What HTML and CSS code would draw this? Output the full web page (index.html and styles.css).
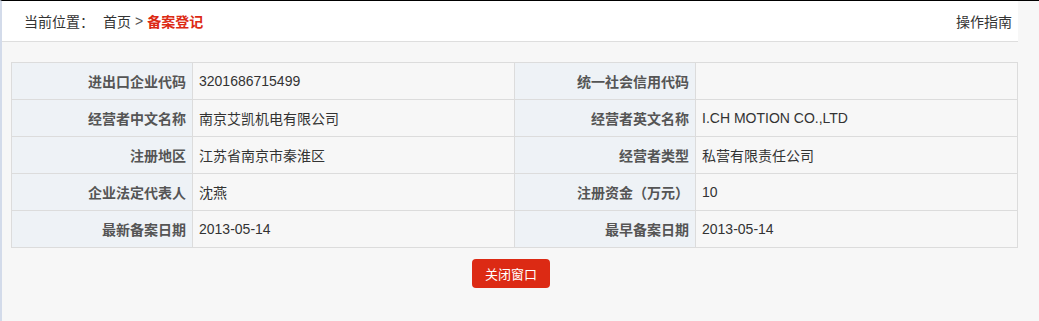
FILE: index.html
```html
<!DOCTYPE html>
<html lang="zh-CN">
<head>
    <meta charset="UTF-8">
    <title>备案登记</title>
    <link rel="stylesheet" href="styles.css">
</head>
<body>
    <div class="page">
        <header class="topbar">
            <div class="crumbs">
                <span class="crumbs-label">当前位置：</span>
                <a href="#" class="crumbs-link">首页</a>
                <span class="crumbs-sep">&gt;</span>
                <span class="crumbs-current">备案登记</span>
            </div>
            <a href="#" class="guide-link">操作指南</a>
        </header>

        <div class="content">
            <table class="info-table">
                <colgroup>
                    <col class="col-label">
                    <col class="col-value">
                    <col class="col-label">
                    <col class="col-value">
                </colgroup>
                <tbody>
                    <tr>
                        <th>进出口企业代码</th>
                        <td>3201686715499</td>
                        <th>统一社会信用代码</th>
                        <td></td>
                    </tr>
                    <tr>
                        <th>经营者中文名称</th>
                        <td>南京艾凯机电有限公司</td>
                        <th>经营者英文名称</th>
                        <td>I.CH MOTION CO.,LTD</td>
                    </tr>
                    <tr>
                        <th>注册地区</th>
                        <td>江苏省南京市秦淮区</td>
                        <th>经营者类型</th>
                        <td>私营有限责任公司</td>
                    </tr>
                    <tr>
                        <th>企业法定代表人</th>
                        <td>沈燕</td>
                        <th>注册资金（万元）</th>
                        <td>10</td>
                    </tr>
                    <tr>
                        <th>最新备案日期</th>
                        <td>2013-05-14</td>
                        <th>最早备案日期</th>
                        <td>2013-05-14</td>
                    </tr>
                </tbody>
            </table>

            <div class="actions">
                <button type="button" class="close-btn">关闭窗口</button>
            </div>
        </div>
    </div>
</body>
</html>
```

FILE: styles.css
```css
:root {
    --page-bg: #f7f7f7;
    --label-bg: #eef2f6;
    --border-color: #dcdcdc;
    --text-color: #333;
    --label-color: #555;
    --accent-red: #dc2a14;
}

html, body {
    height: 100%;
}

body {
    margin: 0;
    font-family: "Liberation Sans", Arial, "Noto Sans CJK SC", sans-serif;
    font-size: 14px;
    color: var(--text-color);
    background-color: var(--page-bg);
    border-top: 1px solid #000;
    border-left: 2px solid #d3dbea;
    box-sizing: border-box;
}

.page {
    width: 1016px;
}

.topbar {
    height: 41px;
    box-sizing: border-box;
    background-color: #fff;
    border-bottom: 1px solid #dedede;
    display: flex;
    justify-content: space-between;
    align-items: center;
    padding: 0 6px 0 22px;
}

.crumbs {
    display: flex;
    align-items: center;
}

.crumbs-label {
    margin-right: 9px;
}

.crumbs-link,
.guide-link {
    color: var(--text-color);
    text-decoration: none;
}

.crumbs-sep {
    margin: 0 4px;
    color: #555;
}

.crumbs-current {
    color: var(--accent-red);
    font-weight: bold;
}

.content {
    padding: 20px 0 0 9px;
}

.info-table {
    width: 100%;
    border-collapse: collapse;
    table-layout: fixed;
    border: 1px solid var(--border-color);
}

.col-label {
    width: 181px;
}

.info-table th,
.info-table td {
    height: 37px;
    padding: 0 6px;
    border: 1px solid var(--border-color);
    box-sizing: border-box;
}

.info-table th {
    background-color: var(--label-bg);
    color: var(--label-color);
    font-weight: bold;
    text-align: right;
}

.info-table td {
    text-align: left;
    color: var(--text-color);
}

.actions {
    display: flex;
    justify-content: center;
    margin-top: 11px;
    padding-right: 7px;
}

.close-btn {
    width: 78px;
    height: 29px;
    border: none;
    border-radius: 4px;
    background-color: var(--accent-red);
    color: #fff;
    font-family: inherit;
    font-size: 13px;
    cursor: pointer;
}
```
